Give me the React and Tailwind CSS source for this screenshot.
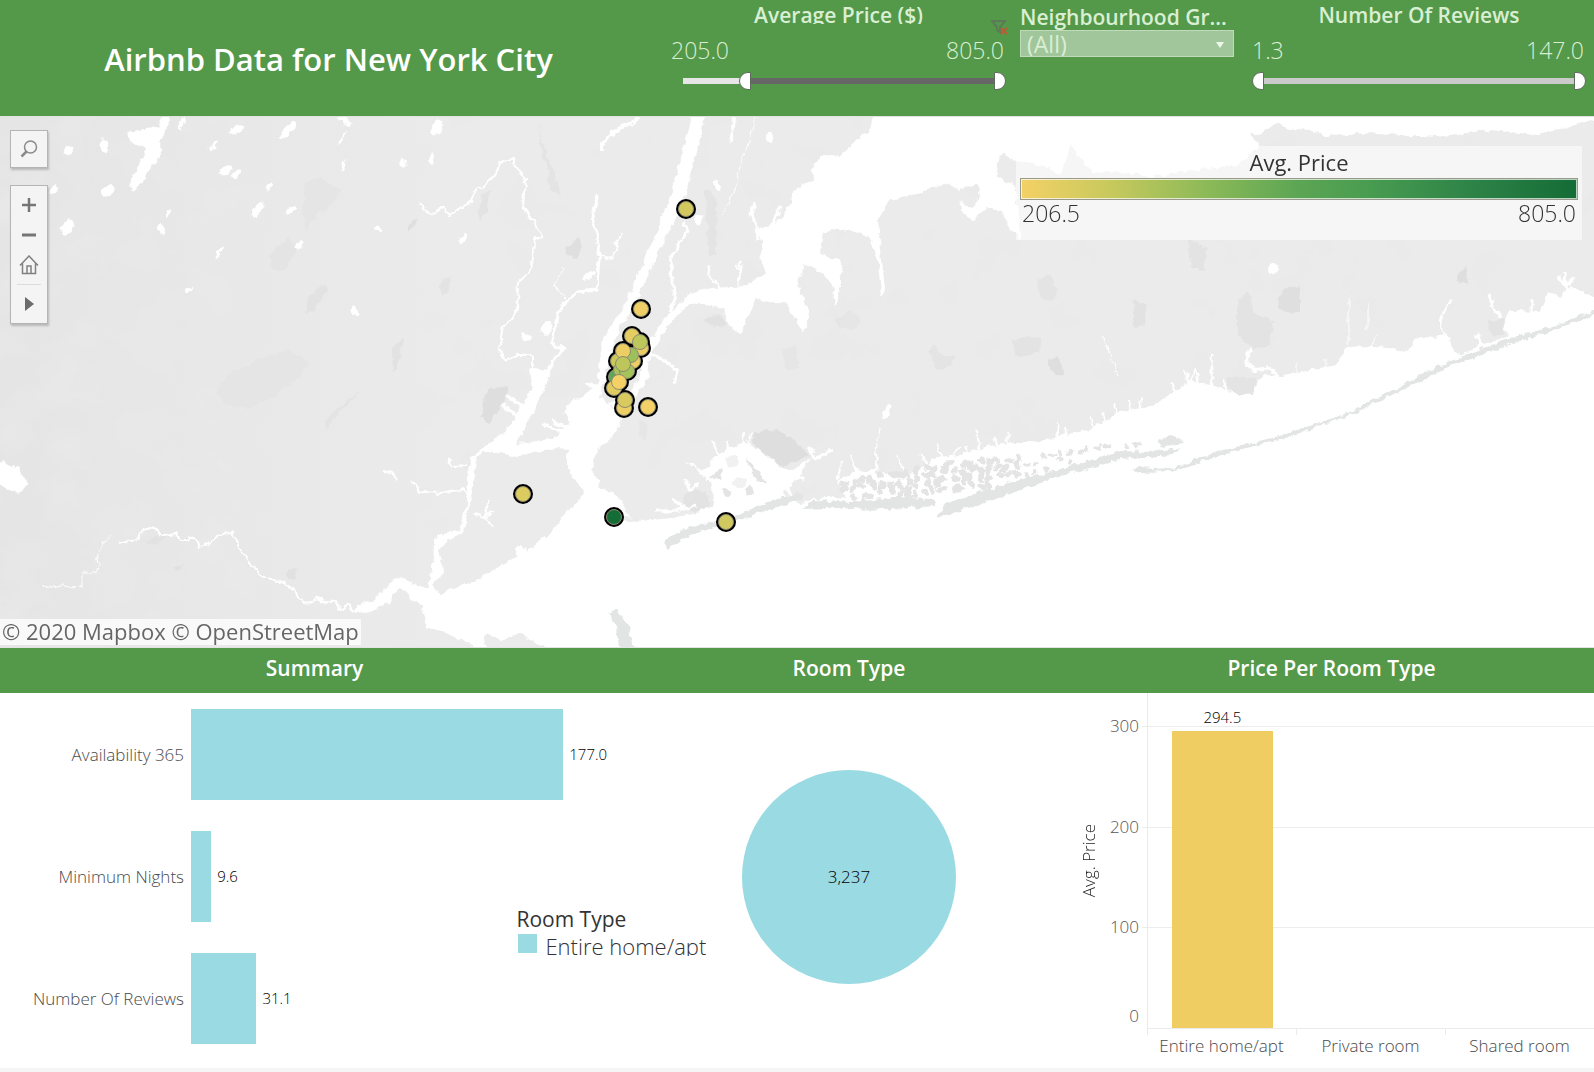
import React, { useState } from "react";

const PALE = "text-[#d9efd3]";

const pins = [
  [686, 209, "#d3c85e"],
  [641, 309, "#f0cf66"],
  [632, 336, "#e6cd62"],
  [641, 348, "#e9cd63"],
  [640, 342, "#bcc75c"],
  [618, 361, "#c9c95c"],
  [633, 361, "#ecce64"],
  [631, 355, "#9cc05c"],
  [623, 351, "#ecce64"],
  [616, 377, "#5ea75a"],
  [621, 370, "#a6c25b"],
  [627, 371, "#a6c25b"],
  [623, 364, "#bcc65b"],
  [614, 388, "#e0cb60"],
  [619, 382, "#f4d166"],
  [624, 408, "#ecce64"],
  [625, 400, "#d8ca5f"],
  [648, 407, "#f4d166"],
  [523, 494, "#dccb5e"],
  [614, 517, "#146c36"],
  [726, 522, "#cfc95f"],
];

// x, y, half width, half height, rotation
const lakes = [
  [68, 151, 6, 4, -50], [104, 146, 4, 7, -20], [107, 191, 8, 4, -35], [237, 129, 8, 4, -35],
  [288, 130, 12, 4, -45], [437, 127, 6, 8, 0], [213, 146, 7, 2, -45], [226, 170, 6, 4, -30],
  [236, 174, 6, 3, -40], [343, 166, 2, 6, 10], [404, 163, 4, 3, 40], [432, 160, 3, 6, 5],
  [270, 187, 5, 3, -50], [54, 190, 3, 5, 20], [258, 209, 9, 4, -50], [291, 210, 5, 2, -40],
  [67, 228, 5, 8, 25], [167, 213, 2, 4, 10], [161, 228, 2, 5, 0], [299, 245, 5, 3, -35],
  [219, 253, 7, 2, -50], [188, 290, 3, 2, 0], [355, 311, 3, 6, -15], [463, 238, 7, 2, -65],
  [342, 138, 9, 1, -55], [182, 124, 7, 2, -70], [344, 120, 9, 2, 30], [378, 228, 4, 2, 50],
  [546, 328, 7, 6, -60], [526, 337, 6, 3, 20], [769, 137, 4, 4, 0], [717, 186, 3, 5, -30],
  [699, 220, 4, 5, 30], [1273, 269, 5, 5, 30], [589, 275, 7, 3, -35], [887, 412, 3, 8, 25],
];

// outline, opacity
const parks = [
  ["M568 247L579 236L582 240L580 252L575 259L566 253Z", 0.9],
  ["M484 397L490 388L507 387L508 395L497 412L489 423L481 416Z", 1],
  ["M754 433L775 429L790 436L809 455L783 467L760 450L753 443Z", 1],
  ["M215 394L226 376L256 360L290 350L309 362L300 378L268 400L247 409L226 404Z", 0.3],
  ["M303 182L322 179L340 190L332 203L315 216L306 232L302 215L306 200Z", 0.4],
  ["M1133 300L1146 305L1145 326L1135 328Z", 0.7],
  ["M1238 300L1248 292L1255 315L1274 320L1270 345L1256 348L1243 342L1236 325Z", 0.6],
  ["M1279 298L1283 290L1300 287V313L1290 314L1278 308Z", 0.9],
  ["M1012 342L1020 337L1042 338L1040 350L1028 357L1015 356Z", 0.6],
  ["M1049 358L1057 355L1065 374L1055 375L1049 367Z", 1],
  ["M928 350L935 346L942 356L953 357L952 366L937 370Z", 0.5],
  ["M835 318L850 311L862 320L855 329L838 327Z", 0.4],
  ["M1036 278L1050 275L1058 293L1050 303L1041 296Z", 0.5],
  ["M1228 377L1256 378L1254 396L1237 396L1227 388Z", 0.5],
  ["M1457 276L1468 265L1464 276L1468 285L1458 282Z", 1],
  ["M1487 322L1503 318L1504 334L1492 336Z", 0.6],
  ["M1188 240L1207 248L1203 270L1192 268Z", 0.6],
  ["M782 350L795 345L800 368L788 371Z", 0.4],
  ["M539 125L543 145L550 160L556 177L560 196L551 190L547 165L541 150Z", 0.5],
  ["M481 195L490 190L488 210L478 222Z", 0.6],
  ["M392 348L404 336L399 360L393 372Z", 0.7],
  ["M440 284L450 275L449 290L442 296Z", 0.6],
  ["M308 298L324 284L328 290L315 308L306 314Z", 0.6],
  ["M270 252L288 238L297 246L286 270L272 270Z", 0.35],
  ["M409 224L418 219L413 229L409 231Z", 0.9],
  ["M326 420L345 402L360 392L340 412L325 430Z", 0.5],
  ["M150 538L168 535L158 545L146 543Z", 0.5],
  ["M173 568L183 563L181 570L174 572Z", 0.8],
  ["M286 568L298 570L296 581L286 580Z", 0.8],
  ["M704 320L717 314L727 321L720 328L712 325Z", 0.8],
  ["M705 190L716 195L717 253L709 258Z", 0.5],
  ["M686 492L705 490L712 510L698 515L682 503Z", 0.6],
  ["M639 420L648 424L646 440L640 438Z", 0.4],
];

const rivers = [
  ["M420 202L425 210L432 215L442 207L450 215L458 210L470 202L477 188L485 186L497 172L500 162L513 158L517 170L525 178L523 208L537 225L542 238L535 238L530 273L518 282L517 310L502 330L499 350L505 360L517 355L533 355L533 377", 2],
  ["M640 118L628 124L620 127L612 134L602 143L602 150", 4],
  ["M598 195L594 210L593 217L597 240L600 253L598 270L597 290L577 292L565 303L557 315L555 330L551 344L564 348L552 362L548 378", 3],
  ["M597 253L607 259L613 257L618 240L622 233", 2],
  ["M564 267L556 280L554 287L566 298", 1],
  ["M683 222L688 230L671 258L672 282L676 297L669 312", 3],
  ["M735 116L733 130L730 143", 3],
  ["M755 116L750 140L742 160L734 190L722 215", 1],
  ["M708 264L710 276L722 290M741 262L738 290M737 265L741 280", 2],
  ["M754 202L752 215L757 225L758 240M780 205L774 222L768 232", 3],
  ["M40 587L63 585L72 588L82 587L82 572L96 572L99 565L96 556L102 548L104 544L111 536", 1],
  ["M120 543L137 540L143 530L153 527L160 533L165 535L175 533L182 541L186 541L188 537L198 541L200 549L212 541L223 533L232 532L240 550L252 564L263 578L287 584L297 594L303 603L310 602L317 598L330 603L335 601L340 610L349 604L353 613L360 607", 2],
  ["M384 471L392 473L397 479M412 481L420 488L420 492L443 493L450 491L463 490L469 497", 2],
  ["M448 458L453 466L466 465", 2],
  ["M648 355L660 358L672 366L678 371L674 384M645 352L640 380", 3],
  ["M502 405L520 418M508 395L522 408", 4],
  ["M542 424L570 434M552 420L572 430", 3],
  ["M586 384L600 387", 3],
  ["M655 511L678 511L696 505M684 480L690 490L698 484M672 500L684 505L676 512", 3],
  ["M686 462L702 472M712 441L720 455M727 441L730 453M742 433L745 448M754 433L748 440L750 450", 2],
  ["M809 447L815 459L832 450M792 475L805 480M785 484L790 495", 3],
  ["M837 480L842 462M850 456L858 476M875 452L877 475M937 443L944 465L960 447M977 430L980 455M993 437L999 447M1007 432L1008 445M897 457L909 478M920 453L932 472M966 445L972 460", 2],
  ["M1056 423L1058 440M1066 427L1068 440M1090 417L1096 432M1103 413L1106 430M1114 405L1118 418M1128 400L1130 412M1140 398L1141 410", 2],
  ["M1183 370L1190 384L1196 368L1200 390M1213 355L1212 386M1224 380L1226 392M1171 383L1180 394", 2],
  ["M1252 347L1246 356L1247 365L1256 370L1270 368L1280 376", 4],
  ["M1348 298V345M1368 302V330M1376 334L1372 348M1325 360V370M1296 364V373", 1],
  ["M1451 300L1444 312L1441 325L1446 338", 2],
  ["M1488 292L1492 307L1502 318M1489 301L1495 303M1476 335L1482 345M1532 299V314M1565 272L1566 296M1558 276L1566 287L1573 276", 3],
  ["M880 430L875 455", 1],
  ["M1103 337L1112 360L1118 376", 1],
];

const noise = (n) => {
  const v = Math.sin(n * 127.1) * 43758.5453;
  return v - Math.floor(v);
};

// Marsh islands between the south shore and the barrier beaches
const bayIslands = [];
for (let col = 0; col < 34; col++) {
  const x = 842 + col * 9;
  const top = x < 940 ? 480 - (x - 842) * 0.17 : 463 - (x - 940) * 0.11;
  const bottom = x < 940 ? 495 : 495 - (x - 940) * 0.26;
  for (let y = top, row = 0; y < bottom; y += 8, row++) {
    const n = col * 13 + row * 7 + 1;
    if (x > 1020 && noise(n + 5) < 0.35) continue;
    const size = x > 1020 ? 3 : 4;
    bayIslands.push([x + noise(n) * 6, y + noise(n + 1) * 5, size + noise(n + 2) * 1.5, size - 1, noise(n + 3) * 180]);
  }
}

function TerrainMap() {
  return (
    <svg
      className="absolute inset-0 h-full w-full"
      viewBox="0 117 1594 530"
      preserveAspectRatio="xMidYMid slice"
      role="img"
      aria-label="Map of average prices around New York City"
    >
      <defs>
        <filter id="coast" x="0" y="0" width="100%" height="100%">
          <feTurbulence type="fractalNoise" baseFrequency="0.13" numOctaves="3" seed="4" />
          <feDisplacementMap in="SourceGraphic" scale="7" xChannelSelector="R" yChannelSelector="G" />
        </filter>
        <filter id="relief" x="0" y="0" width="100%" height="100%">
          <feTurbulence type="fractalNoise" baseFrequency="0.022" numOctaves="4" seed="11" />
          <feColorMatrix values="0 0 0 0 0.82  0 0 0 0 0.82  0 0 0 0 0.82  1.6 0 0 0 -0.66" />
        </filter>
        <linearGradient id="shade" x1="0" x2="1" y1="0" y2="0">
          <stop offset="0" stopColor="#e5e5e5" />
          <stop offset="0.28" stopColor="#ebebeb" />
          <stop offset="1" stopColor="#ebebeb" />
        </linearGradient>
      </defs>

      <rect x="0" y="116" width="1594" height="532" fill="url(#shade)" />
      <rect x="0" y="116" width="1594" height="532" filter="url(#relief)" />

      <g filter="url(#coast)">
        <g fill="#dedede">
          {parks.map(([d, o]) => (
            <path key={d} d={d} opacity={o} />
          ))}
        </g>
        <g fill="#fff">
          {lakes.map(([x, y, a, b, r]) => (
            <ellipse key={x + "-" + y} cx={x} cy={y} rx={a} ry={b} transform={`rotate(${r} ${x} ${y})`} />
          ))}
          <path d="M163 114L170 114L167 133L160 141L161 157L151 166L144 179L133 193L129 186L135 172L142 158L146 149L130 142L127 133L143 129L158 128Z" />
          <path d="M-5 462L6 463L20 470L27 485L20 493L-5 483Z" />
          {/* Hudson, harbour, bays and the ocean */}
          <path d="M692 112L685 140L677 170L670 197L660 220L653 240L643 260L633 287L620 313L603 338L598 377L598 383L583 397L568 403L564 413L570 423L557 437L537 442L517 444L527 423L537 403L545 387L549 370L530 368L532 387L527 397L513 420L503 433L483 447L472 458L467 473L467 500L460 530L443 533L433 540L432 570L427 588L410 583L400 578L393 579L378 597L360 605L356 612L372 610L388 604L400 588L407 592L411 600L422 605L427 627L445 632L463 640L482 652L1600 652V300L1570 286L1563 297L1547 293L1540 312L1510 311L1503 320L1507 337L1483 343L1463 355L1452 352L1450 336L1430 337L1417 338L1405 353L1388 347L1370 346L1348 347L1343 352L1337 365L1313 369L1283 376L1267 375L1257 380L1253 396L1237 395L1217 387L1203 383L1190 380L1170 395L1150 407L1120 411L1093 428L1060 437L1033 442L1007 442L977 449L960 455L937 457L920 468L900 478L877 470L853 472L837 482L845 497L813 499L803 503L790 500L783 492L800 477L810 458L792 470L783 468L760 450L747 443L728 448L715 459L700 473L712 484L713 505L697 512L673 515L636 521L624 512L622 500L600 487L592 470L597 450L610 438L622 424L618 412L608 406L600 398L606 372L612 350L620 327L637 300L650 273L660 250L675 220L682 207L688 183L698 147L706 112Z" />
          {/* East River */}
          <path d="M606 404L625 398L638 380L642 358L652 338L668 314L682 302L693 292L713 288L747 286L766 273L760 257L763 240L775 250L800 264L797 287L780 300L757 298L748 316L741 334L729 326L724 308L712 306L700 304L690 304L678 315L660 337L650 358L648 378L634 398L620 412Z" />
          {/* Long Island Sound */}
          <path d="M876 110L870 130L853 143L840 155L820 157L812 170L813 180L797 187L790 203L783 217L770 227L756 230L763 243L773 262L765 280L760 300L773 305L786 303L797 322L804 334L810 313L805 300L797 287L803 263L815 268L830 280L837 305L842 273L843 262L820 253L823 233L837 228L870 237L878 260L881 297L885 290L880 240L878 220L890 200L920 193L943 183L960 190L977 183L980 197L972 210L960 200L963 214L973 220L987 207L1000 210L1010 227L1020 240L1016 187L998 177L997 163L1004 153L1017 162L1040 165L1062 175L1070 145L1078 155L1093 172L1114 172L1152 177L1180 172L1240 165L1258 146L1250 133L1262 133L1275 123L1290 130L1303 128L1326 135L1379 133L1436 137L1489 130L1538 135L1600 118V110Z" />
        </g>
        <g fill="none" stroke="#fff" strokeLinejoin="round">
          {rivers.map(([d, w]) => (
            <path key={d} d={d} strokeWidth={w} />
          ))}
        </g>
        <g fill="#ebebeb">
          <path d="M483 452L497 452L513 456L537 452L557 447L567 448L567 467L582 488L583 495L563 517L543 540L524 553L500 566L477 580L440 594L433 585L444 570L438 550L446 541L463 535L470 503L474 480L475 463Z" />
          <path d="M486 648L484 637L488 633L500 641L520 633L548 650Z" />
          <path d="M622 517L650 518L673 514L700 512L673 518L628 522Z" />
        </g>
        <path fill="none" stroke="#fff" strokeWidth="2" d="M475 514L485 517L492 527M490 498L488 508L485 515L495 513" />
        <circle cx="521" cy="551" r="5" fill="#fff" />
        <g fill="#e3e4e4">
          <path d="M608 614L617 609L630 630L634 650L619 650L617 627Z" />
          <path d="M666 549L667 538L690 527L733 517L780 498L803 492L803 499L780 506L740 519L713 528L690 535Z" />
          <path d="M803 509L813 500L853 502L893 498L935 499V506L893 509L827 508Z" />
          <path d="M936 518L943 505L977 492L1020 480L1060 469L1120 451L1150 452L1180 448L1172 455L1123 459L1060 476L993 500Z" />
          <path d="M1132 469L1142 466L1150 469L1173 468L1217 452L1283 435L1350 412L1383 395L1443 364L1500 342L1550 327L1600 309V313L1550 331L1500 348L1443 369L1383 400L1350 415L1283 439L1217 456L1175 471L1140 472Z" />
          <path d="M1156 441L1170 436L1184 440L1178 445L1160 446Z" />
        </g>
        <g fill="#e4e4e4">
          {bayIslands.map(([x, y, a, b, r], i) => (
            <ellipse key={i} cx={x} cy={y} rx={a} ry={b} transform={`rotate(${r} ${x} ${y})`} />
          ))}
          <path d="M712 474L722 468L720 480L710 478Z" />
          <path d="M746 458L756 468L766 482L754 478Z" />
          <circle cx="727" cy="493" r="4" />
          <circle cx="740" cy="483" r="6" opacity=".5" />
          <circle cx="750" cy="491" r="4" />
          <circle cx="733" cy="461" r="6" opacity=".5" />
        </g>
      </g>

      <g fill="#000">
        {pins.map(([x, y]) => (
          <circle key={x + "," + y} cx={x} cy={y} r="10" />
        ))}
      </g>
      <g stroke="#8c8a72" strokeWidth="1">
        {pins.map(([x, y, c]) => (
          <circle key={x + "," + y} cx={x} cy={y} r="7.5" fill={c} />
        ))}
      </g>
    </svg>
  );
}

const thumb =
  "pointer-events-none absolute inset-0 h-full w-full appearance-none bg-transparent [&::-webkit-slider-thumb]:pointer-events-auto [&::-webkit-slider-thumb]:h-[18px] [&::-webkit-slider-thumb]:w-3 [&::-webkit-slider-thumb]:appearance-none [&::-webkit-slider-thumb]:border [&::-webkit-slider-thumb]:border-[#5f6b5c] [&::-webkit-slider-thumb]:bg-white";
const thumbLow = "[&::-webkit-slider-thumb]:rounded-l-[9px]";
const thumbHigh = "[&::-webkit-slider-thumb]:rounded-r-[9px]";

function RangeFilter({ title, min, max, low, high, step, fill, rest, inset }) {
  const [a, setA] = useState(low);
  const [b, setB] = useState(high);
  const pct = (v) => ((v - min) / (max - min)) * 100;
  return (
    <fieldset className="min-w-0">
      <legend className={`h-6 w-full overflow-hidden text-center text-[21px] leading-[30px] font-semibold whitespace-nowrap ${PALE}`}>
        {title}
      </legend>
      <div className={`mt-2 flex justify-between text-[23px] leading-9 font-light ${PALE}`}>
        <output>{a.toFixed(1)}</output>
        <output className="pr-0.5">{b.toFixed(1)}</output>
      </div>
      <div className={`relative mt-1 h-[18px] ${inset}`}>
        <div className={`absolute inset-x-1 top-1.5 h-1.5 ${rest}`}>
          <div className={`absolute inset-y-0 ${fill}`} style={{ left: pct(a) + "%", right: 100 - pct(b) + "%" }} />
        </div>
        <input type="range" aria-label={title + " minimum"} min={min} max={max} step={step} value={a}
          onChange={(e) => setA(Math.min(+e.target.value, b))} className={`${thumb} ${thumbLow}`} />
        <input type="range" aria-label={title + " maximum"} min={min} max={max} step={step} value={b}
          onChange={(e) => setB(Math.max(+e.target.value, a))} className={`${thumb} ${thumbHigh}`} />
      </div>
    </fieldset>
  );
}

function Header() {
  return (
    <header className="grid min-h-[116px] grid-cols-[657fr_363fr_220fr_354fr] bg-[#54984a]">
      <h1 className="self-center pt-0.5 text-center text-[31px] leading-10 font-semibold text-white">
        Airbnb Data for New York City
      </h1>
      <div className="relative px-3.5">
        <RangeFilter title="Average Price ($)" min={64} max={805} low={205} high={805} step={1}
          fill="bg-[#666666]" rest="bg-[#e6e6e6]" inset="ml-2" />
        <button type="button" aria-label="Clear filter" className="absolute top-5 right-3">
          <svg width="17" height="15" viewBox="0 0 17 15" fill="none">
            <path d="M1 1H14L9 7V12L6 10V7Z" stroke="#5c7a56" strokeWidth="2" />
            <path d="M10 8L16 14M16 8L10 14" stroke="#bd5a35" strokeWidth="2" />
          </svg>
        </button>
      </div>
      <div className="pr-1.5">
        <label htmlFor="group" className={`block h-[30px] overflow-hidden text-[21px] leading-[34px] font-semibold whitespace-nowrap ${PALE}`}>
          Neighbourhood Gr...
        </label>
        <div className="relative">
          <select id="group" className={`block h-[27px] w-full appearance-none border border-[#c0dbba] bg-[#a2c69b] pl-1.5 text-[23px] leading-6 text-[#d9efd3]`}>
            <option>(All)</option>
          </select>
          <svg className="pointer-events-none absolute top-3 right-2.5" width="8" height="6" viewBox="0 0 8 6">
            <path d="M0 0H8L4 6Z" fill="#edf7ea" />
          </svg>
        </div>
      </div>
      <div className="pr-2 pl-3">
        <RangeFilter title="Number Of Reviews" min={1.3} max={147} low={1.3} high={147} step={0.1}
          fill="bg-[#cacaca]" rest="bg-[#cacaca]" inset="ml-0" />
      </div>
    </header>
  );
}

const mapBox = "border border-[#b5b5b5] bg-[#f4f4f4] shadow-[1px_2px_2px_rgba(0,0,0,0.2)]";

function MapPanel() {
  return (
    <section className="relative min-h-[400px] flex-1 overflow-hidden border-y border-[#e2e4e1] bg-[#ebebeb]">
      <TerrainMap />
      <div className="absolute top-[13px] left-2.5 flex w-[38px] flex-col gap-[17px]">
        <button type="button" aria-label="Search map" className={`flex h-[38px] items-center justify-center ${mapBox}`}>
          <svg width="18" height="18" viewBox="0 0 18 18" fill="none" stroke="#8a8a8a">
            <circle cx="10.500" cy="7" r="6" strokeWidth="1.500" />
            <path d="M6.500 11.500L1.500 16.500" strokeWidth="2.500" />
          </svg>
        </button>
        <div className={`flex flex-col ${mapBox}`}>
          <button type="button" aria-label="Zoom in" className="flex h-[38px] items-center justify-center">
            <svg width="14" height="14" viewBox="0 0 14 14" stroke="#757575" strokeWidth="2.500"><path d="M0 7H14M7 0V14" /></svg>
          </button>
          <button type="button" aria-label="Zoom out" className="flex h-[22px] items-center justify-center">
            <svg width="14" height="4" viewBox="0 0 14 4" stroke="#757575" strokeWidth="3"><path d="M0 2H14" /></svg>
          </button>
          <button type="button" aria-label="Reset view" className="mx-1.5 flex h-[39px] items-center justify-center border-b border-[#dcdcdc]">
            <svg width="20" height="20" viewBox="0 0 20 20" fill="none" stroke="#808080" strokeWidth="1.500">
              <path d="M1 10.500L10 1L19 10.500M3.500 8.500V18.500H16.500V8.500M8 18V11H12V18" />
            </svg>
          </button>
          <button type="button" aria-label="More map tools" className="flex h-[38px] items-center justify-center">
            <svg width="9" height="14" viewBox="0 0 9 14"><path d="M0 0L9 7L0 14Z" fill="#6b6b6b" /></svg>
          </button>
        </div>
      </div>

      <div className="absolute top-[29px] right-3 w-[566px] bg-white/55 px-1 pb-3.5 text-[#333333]">
        <div className="text-center text-[22px] leading-8">Avg. Price</div>
        <div className="h-[22px] border border-[#9a9a8c] bg-[linear-gradient(90deg,#f4d166_0%,#c8c95d_16%,#8dba58_33%,#5ca554_50%,#489c50_63%,#2f8448_80%,#146c36_100%)] ring-1 ring-white/70 ring-inset" />
        <div className="flex justify-between px-0.5 text-[23px] leading-[26px] font-light">
          <span>206.5</span>
          <span>805.0</span>
        </div>
      </div>

      <div className="absolute bottom-0.5 left-0 bg-white/75 px-0.5 pb-0.5 text-[22px] leading-6 whitespace-nowrap text-[#666666]">
        © 2020 Mapbox © OpenStreetMap
      </div>
    </section>
  );
}

const summary = [
  ["Availability 365", 177.0],
  ["Minimum Nights", 9.6],
  ["Number Of Reviews", 31.1],
];

function Summary() {
  return (
    <div className="flex flex-col gap-[31px] pt-4">
      {summary.map(([name, value]) => (
        <div key={name} className="grid h-[91px] grid-cols-[191fr_438fr] items-center">
          <span className="pr-[7px] text-right text-[17px] font-light whitespace-nowrap text-[#4a4a4a]">{name}</span>
          <div className="flex h-full items-center gap-1.5">
            <div className="h-full bg-[#9adae3]" style={{ width: (value / 177) * 85 + "%" }} />
            <span className="text-[15px] font-light text-black">{value.toFixed(1)}</span>
          </div>
        </div>
      ))}
    </div>
  );
}

function RoomType() {
  return (
    <div className="flex items-center justify-center pb-3">
      <div className="flex size-[214px] items-center justify-center rounded-full bg-[#9adae3] text-[17px] font-light text-black">
        3,237
      </div>
    </div>
  );
}

function PriceChart() {
  return (
    <div className="flex">
      <div className="flex w-[78px] pb-11">
        <div className="flex w-10 items-center justify-center">
          <span className="rotate-180 text-[17px] font-light whitespace-nowrap text-[#222222] [writing-mode:vertical-rl]">
            Avg. Price
          </span>
        </div>
        <div className="flex flex-1 flex-col pt-[21px] text-right text-[17px] leading-6 font-light text-[#555555]">
          <span className="pr-2">300</span>
          <span className="mt-[77px] pr-2">200</span>
          <span className="mt-[76px] pr-2">100</span>
          <span className="mt-[65px] pr-2">0</span>
        </div>
      </div>
      <div className="flex flex-1 flex-col">
        <div className="relative h-[336px] border-b border-l border-[#ebebeb]">
          <div className="absolute inset-x-0 top-[33px] -ml-1.5 border-t border-[#ededed]" />
          <div className="absolute inset-x-0 top-[134px] -ml-1.5 border-t border-[#ededed]" />
          <div className="absolute inset-x-0 top-[234px] -ml-1.5 border-t border-[#ededed]" />
          <div className="relative flex h-full w-1/3 flex-col items-center justify-end">
            <span className="pb-0.5 text-[15px] leading-6 font-light text-black">294.5</span>
            <div className="h-[297px] w-[68%] bg-[#f0cd63]" />
          </div>
        </div>
        <div className="grid grid-cols-3 text-center text-[17px] leading-[34px] font-light whitespace-nowrap text-[#4a4a4a]">
          {["Entire home/apt", "Private room", "Shared room"].map((name) => (
            <div key={name}>
              <div className="-mb-1.5 h-1.5 border-l border-[#ebebeb]" />
              {name}
            </div>
          ))}
        </div>
      </div>
    </div>
  );
}

export default function App() {
  return (
    <div className="flex min-h-screen flex-col bg-white font-['Open_Sans','Noto_Sans',sans-serif]">
      <Header />
      <MapPanel />
      <div className="grid grid-cols-[629fr_440fr_525fr] bg-[#54984a] pt-1 pb-[9px] text-center text-[21px] leading-8 font-semibold text-white">
        <h2>Summary</h2>
        <h2>Room Type</h2>
        <h2>Price Per Room Type</h2>
      </div>
      <main className="relative grid h-[375px] grid-cols-[629fr_440fr_525fr] overflow-hidden">
        <Summary />
        <RoomType />
        <PriceChart />
        <div className="absolute top-[212px] left-[32.4%] text-[#333333]">
          <div className="text-[21px] leading-7">Room Type</div>
          <div className="flex h-[23px] gap-2 overflow-hidden pl-0.5 text-[22px] font-light">
            <span className="mt-px size-[19px] bg-[#9adae3]" />
            <span className="leading-[26px]">Entire home/apt</span>
          </div>
        </div>
      </main>
      <div className="h-1 bg-[#f5f5f5]" />
    </div>
  );
}
